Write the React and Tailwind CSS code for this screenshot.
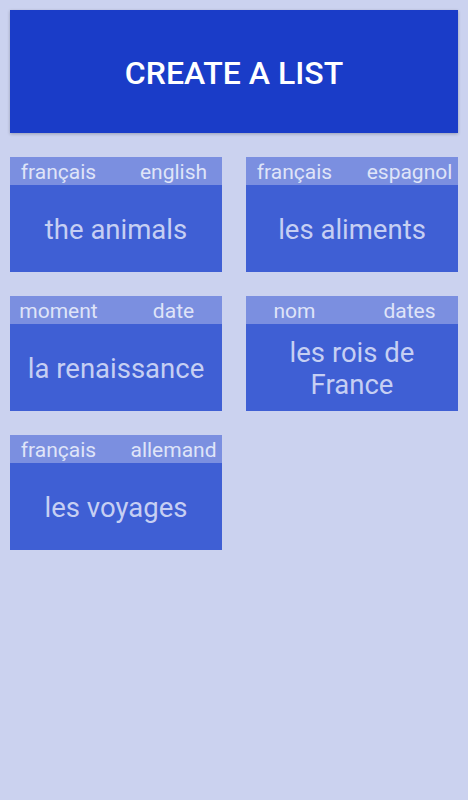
import React from "react";

const LISTS = [
  { left: "français", right: "english", title: "the animals" },
  { left: "français", right: "espagnol", title: "les aliments" },
  { left: "moment", right: "date", title: "la renaissance" },
  { left: "nom", right: "dates", title: "les rois de France" },
  { left: "français", right: "allemand", title: "les voyages" },
];

function ListCard({ left, right, title }) {
  return (
    <div className="flex h-[115px] flex-col">
      {/* language header */}
      <div className="grid h-[28px] grid-cols-2 bg-[#7b8fe0] pt-[1px] text-[21px] leading-[28px] text-[#dfe4f8]">
        <span className="pr-[9px] text-center whitespace-nowrap">{left}</span>
        <span className="pl-[9px] text-center whitespace-nowrap">{right}</span>
      </div>
      <div className="flex flex-1 items-center justify-center bg-[#3f5fd4] px-4 pt-[2px] text-center text-[27.5px] leading-[32px] text-[#c6cff3]">
        {title}
      </div>
    </div>
  );
}

export default function App() {
  return (
    <div
      className="min-h-[800px] bg-[#cbd2ef] px-[10px] pt-[10px]"
      style={{ fontFamily: "Roboto, 'Noto Sans', sans-serif" }}
    >
      <button
        type="button"
        className="flex h-[123px] w-full items-center justify-center bg-[#1a3cc8] pt-[2px] text-[32px] font-medium text-white shadow-[0_1px_3px_rgba(0,0,0,0.25)]"
      >
        CREATE A LIST
      </button>

      <div className="mt-[24px] grid grid-cols-2 gap-x-[24px] gap-y-[24px]">
        {LISTS.map((l, i) => (
          <ListCard key={i} {...l} />
        ))}
      </div>
    </div>
  );
}
